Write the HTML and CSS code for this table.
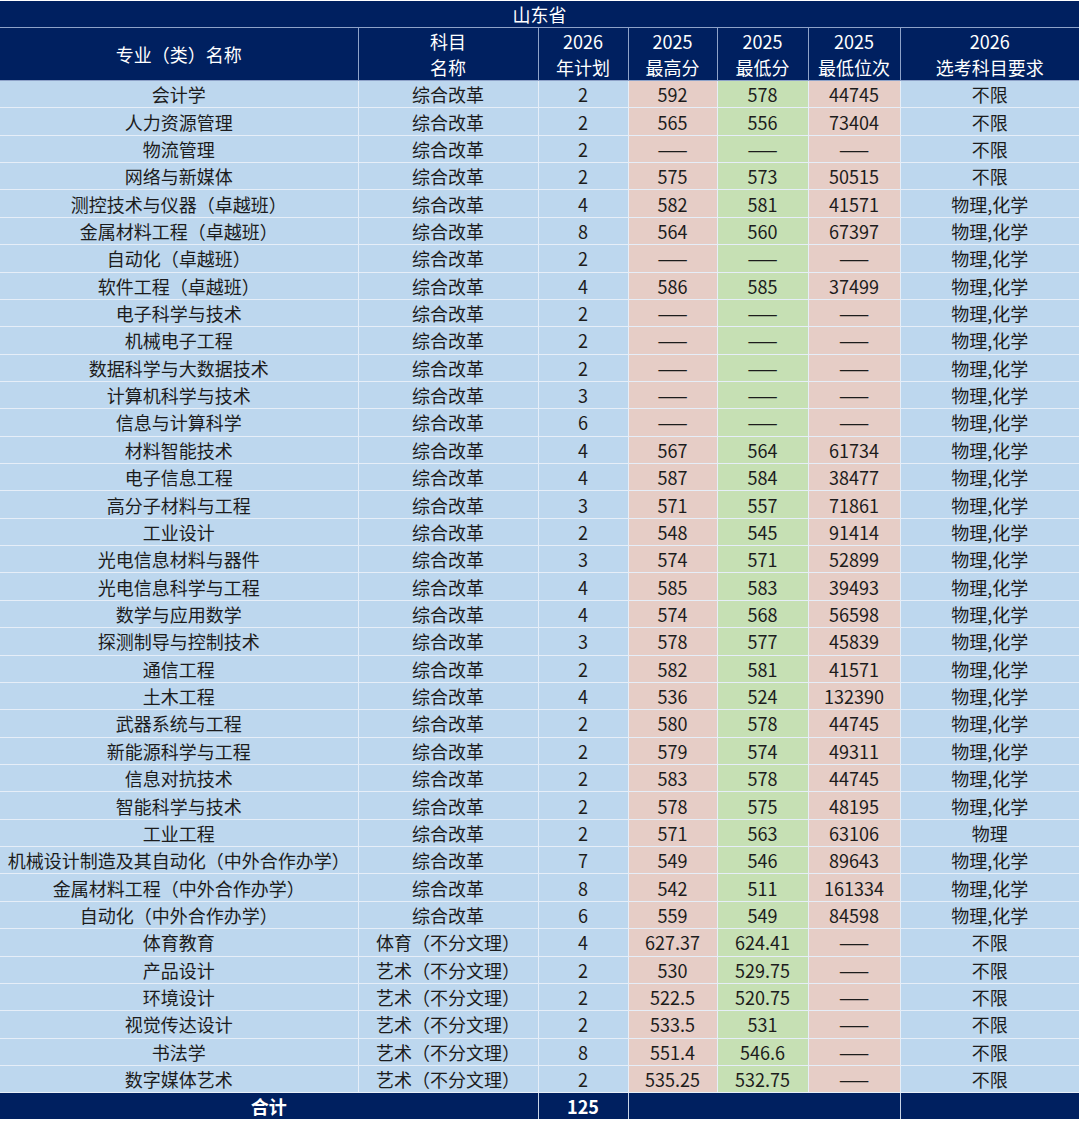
FILE: index.html
```html
<!DOCTYPE html>
<html lang="zh-CN">
<head>
<meta charset="utf-8">
<title>山东省</title>
<link rel="stylesheet" href="styles.css">
</head>
<body>
<table class="sheet">
<colgroup>
<col class="c-name"><col class="c-subj"><col class="c-plan"><col class="c-hi"><col class="c-lo"><col class="c-rank"><col class="c-req">
</colgroup>
<thead>
<tr class="title-row"><th colspan="7">山东省</th></tr>
<tr class="head-row">
<th>专业（类）名称</th>
<th>科目<br>名称</th>
<th>2026<br>年计划</th>
<th>2025<br>最高分</th>
<th>2025<br>最低分</th>
<th>2025<br>最低位次</th>
<th>2026<br>选考科目要求</th>
</tr>
</thead>
<tbody>
<tr><td>会计学</td><td>综合改革</td><td>2</td><td class="pk">592</td><td class="gr">578</td><td class="pk">44745</td><td>不限</td></tr>
<tr><td>人力资源管理</td><td>综合改革</td><td>2</td><td class="pk">565</td><td class="gr">556</td><td class="pk">73404</td><td>不限</td></tr>
<tr><td>物流管理</td><td>综合改革</td><td>2</td><td class="pk">——</td><td class="gr">——</td><td class="pk">——</td><td>不限</td></tr>
<tr><td>网络与新媒体</td><td>综合改革</td><td>2</td><td class="pk">575</td><td class="gr">573</td><td class="pk">50515</td><td>不限</td></tr>
<tr><td>测控技术与仪器（卓越班）</td><td>综合改革</td><td>4</td><td class="pk">582</td><td class="gr">581</td><td class="pk">41571</td><td>物理,化学</td></tr>
<tr><td>金属材料工程（卓越班）</td><td>综合改革</td><td>8</td><td class="pk">564</td><td class="gr">560</td><td class="pk">67397</td><td>物理,化学</td></tr>
<tr><td>自动化（卓越班）</td><td>综合改革</td><td>2</td><td class="pk">——</td><td class="gr">——</td><td class="pk">——</td><td>物理,化学</td></tr>
<tr><td>软件工程（卓越班）</td><td>综合改革</td><td>4</td><td class="pk">586</td><td class="gr">585</td><td class="pk">37499</td><td>物理,化学</td></tr>
<tr><td>电子科学与技术</td><td>综合改革</td><td>2</td><td class="pk">——</td><td class="gr">——</td><td class="pk">——</td><td>物理,化学</td></tr>
<tr><td>机械电子工程</td><td>综合改革</td><td>2</td><td class="pk">——</td><td class="gr">——</td><td class="pk">——</td><td>物理,化学</td></tr>
<tr><td>数据科学与大数据技术</td><td>综合改革</td><td>2</td><td class="pk">——</td><td class="gr">——</td><td class="pk">——</td><td>物理,化学</td></tr>
<tr><td>计算机科学与技术</td><td>综合改革</td><td>3</td><td class="pk">——</td><td class="gr">——</td><td class="pk">——</td><td>物理,化学</td></tr>
<tr><td>信息与计算科学</td><td>综合改革</td><td>6</td><td class="pk">——</td><td class="gr">——</td><td class="pk">——</td><td>物理,化学</td></tr>
<tr><td>材料智能技术</td><td>综合改革</td><td>4</td><td class="pk">567</td><td class="gr">564</td><td class="pk">61734</td><td>物理,化学</td></tr>
<tr><td>电子信息工程</td><td>综合改革</td><td>4</td><td class="pk">587</td><td class="gr">584</td><td class="pk">38477</td><td>物理,化学</td></tr>
<tr><td>高分子材料与工程</td><td>综合改革</td><td>3</td><td class="pk">571</td><td class="gr">557</td><td class="pk">71861</td><td>物理,化学</td></tr>
<tr><td>工业设计</td><td>综合改革</td><td>2</td><td class="pk">548</td><td class="gr">545</td><td class="pk">91414</td><td>物理,化学</td></tr>
<tr><td>光电信息材料与器件</td><td>综合改革</td><td>3</td><td class="pk">574</td><td class="gr">571</td><td class="pk">52899</td><td>物理,化学</td></tr>
<tr><td>光电信息科学与工程</td><td>综合改革</td><td>4</td><td class="pk">585</td><td class="gr">583</td><td class="pk">39493</td><td>物理,化学</td></tr>
<tr><td>数学与应用数学</td><td>综合改革</td><td>4</td><td class="pk">574</td><td class="gr">568</td><td class="pk">56598</td><td>物理,化学</td></tr>
<tr><td>探测制导与控制技术</td><td>综合改革</td><td>3</td><td class="pk">578</td><td class="gr">577</td><td class="pk">45839</td><td>物理,化学</td></tr>
<tr><td>通信工程</td><td>综合改革</td><td>2</td><td class="pk">582</td><td class="gr">581</td><td class="pk">41571</td><td>物理,化学</td></tr>
<tr><td>土木工程</td><td>综合改革</td><td>4</td><td class="pk">536</td><td class="gr">524</td><td class="pk">132390</td><td>物理,化学</td></tr>
<tr><td>武器系统与工程</td><td>综合改革</td><td>2</td><td class="pk">580</td><td class="gr">578</td><td class="pk">44745</td><td>物理,化学</td></tr>
<tr><td>新能源科学与工程</td><td>综合改革</td><td>2</td><td class="pk">579</td><td class="gr">574</td><td class="pk">49311</td><td>物理,化学</td></tr>
<tr><td>信息对抗技术</td><td>综合改革</td><td>2</td><td class="pk">583</td><td class="gr">578</td><td class="pk">44745</td><td>物理,化学</td></tr>
<tr><td>智能科学与技术</td><td>综合改革</td><td>2</td><td class="pk">578</td><td class="gr">575</td><td class="pk">48195</td><td>物理,化学</td></tr>
<tr><td>工业工程</td><td>综合改革</td><td>2</td><td class="pk">571</td><td class="gr">563</td><td class="pk">63106</td><td>物理</td></tr>
<tr><td>机械设计制造及其自动化（中外合作办学）</td><td>综合改革</td><td>7</td><td class="pk">549</td><td class="gr">546</td><td class="pk">89643</td><td>物理,化学</td></tr>
<tr><td>金属材料工程（中外合作办学）</td><td>综合改革</td><td>8</td><td class="pk">542</td><td class="gr">511</td><td class="pk">161334</td><td>物理,化学</td></tr>
<tr><td>自动化（中外合作办学）</td><td>综合改革</td><td>6</td><td class="pk">559</td><td class="gr">549</td><td class="pk">84598</td><td>物理,化学</td></tr>
<tr><td>体育教育</td><td>体育（不分文理）</td><td>4</td><td class="pk">627.37</td><td class="gr">624.41</td><td class="pk">——</td><td>不限</td></tr>
<tr><td>产品设计</td><td>艺术（不分文理）</td><td>2</td><td class="pk">530</td><td class="gr">529.75</td><td class="pk">——</td><td>不限</td></tr>
<tr><td>环境设计</td><td>艺术（不分文理）</td><td>2</td><td class="pk">522.5</td><td class="gr">520.75</td><td class="pk">——</td><td>不限</td></tr>
<tr><td>视觉传达设计</td><td>艺术（不分文理）</td><td>2</td><td class="pk">533.5</td><td class="gr">531</td><td class="pk">——</td><td>不限</td></tr>
<tr><td>书法学</td><td>艺术（不分文理）</td><td>8</td><td class="pk">551.4</td><td class="gr">546.6</td><td class="pk">——</td><td>不限</td></tr>
<tr><td>数字媒体艺术</td><td>艺术（不分文理）</td><td>2</td><td class="pk">535.25</td><td class="gr">532.75</td><td class="pk">——</td><td>不限</td></tr>
</tbody>
<tfoot>
<tr class="total-row"><td colspan="2">合计</td><td>125</td><td colspan="3"></td><td></td></tr>
</tfoot>
</table>
</body>
</html>
```

FILE: styles.css
```css
html, body {
  margin: 0;
  padding: 0;
  background: #ffffff;
}

.sheet {
  width: 1080px;
  table-layout: fixed;
  border-collapse: collapse;
  font-family: "Noto Sans CJK SC", "Noto Sans", sans-serif;
  font-size: 18px;
  color: #1c1c1c;
  margin-top: 1px;
}

.c-name { width: 358px; }
.c-subj { width: 180px; }
.c-plan { width: 90px; }
.c-hi { width: 89px; }
.c-lo { width: 91px; }
.c-rank { width: 92px; }
.c-req { width: 180px; }

.sheet th,
.sheet td {
  padding: 0;
  text-align: center;
  vertical-align: middle;
  white-space: nowrap;
  overflow: hidden;
}

.sheet th {
  background: #002060;
  color: #ffffff;
  font-weight: normal;
  border: 1px solid #8ea2c8;
}

.title-row th {
  height: 26px;
  line-height: 24px;
  border-top: none;
  border-left: none;
  border-right: 2px solid #ffffff;
}

.head-row th {
  height: 50px;
  line-height: 26px;
  padding-top: 0;
}

.head-row th:first-child { border-left: none; }
.head-row th:last-child { border-right: 2px solid #ffffff; }

.sheet tbody td {
  background: #bdd7ee;
  height: 26.36px;
  line-height: 22px;
  border: 1px solid #e6eef8;
}

.sheet tbody td:first-child { border-left: none; }
.sheet tbody td:last-child { border-right: 2px solid #ffffff; }

.sheet tbody td.pk { background: #e6cdc6; }
.sheet tbody td.gr { background: #c6e0b4; }

.total-row td {
  background: #002060;
  color: #ffffff;
  font-weight: bold;
  height: 26px;
  line-height: 22px;
  border: 1px solid #c8d4e6;
  border-bottom: 2px solid #ffffff;
}

.total-row td:first-child { border-left: none; }
.total-row td:last-child { border-right: 2px solid #ffffff; }
```
